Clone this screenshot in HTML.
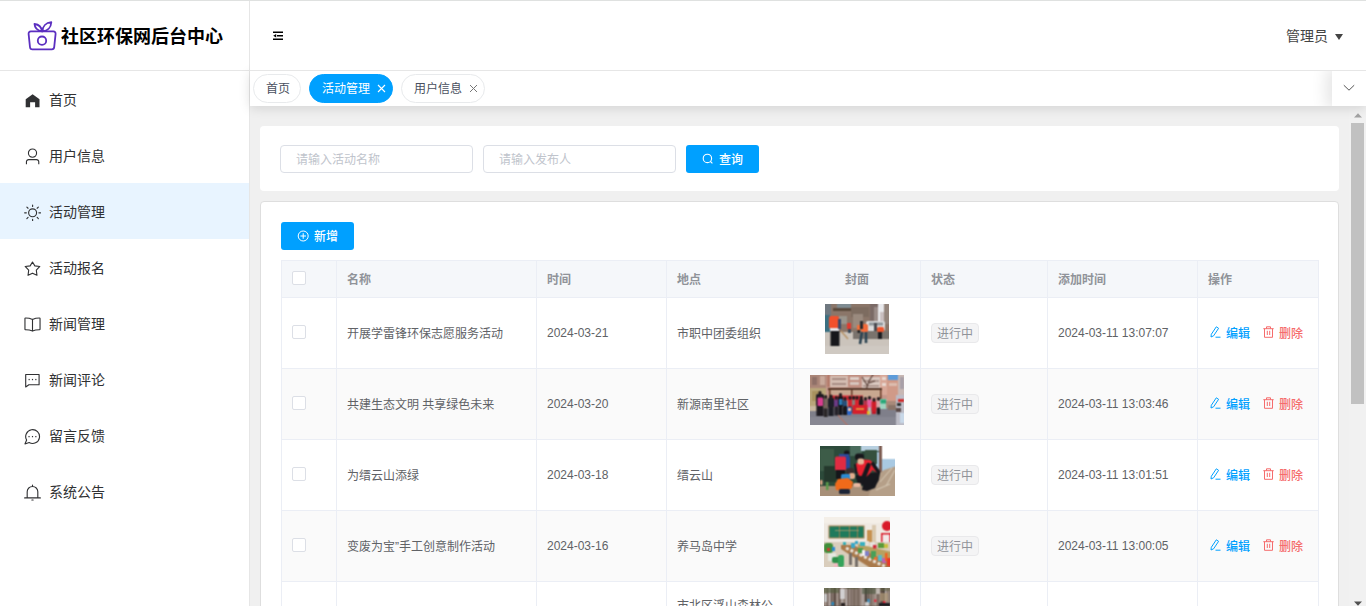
<!DOCTYPE html>
<html lang="zh-CN">
<head>
<meta charset="utf-8">
<title>社区环保网后台中心</title>
<style>
*{box-sizing:border-box;margin:0;padding:0}
html,body{width:1366px;height:606px;overflow:hidden;background:#fff}
body{font-family:"Liberation Sans","Noto Sans CJK SC",sans-serif;font-size:14px;color:#303133;position:relative}
#topline{position:absolute;left:0;top:0;width:1366px;height:1px;background:#dfe1e0;z-index:10}
.abs{position:absolute}
/* sidebar */
#side{position:absolute;left:0;top:0;width:250px;height:606px;border-right:1px solid #e6e6e6;background:#fff}
#logo{position:absolute;left:0;top:0;width:249px;height:71px;border-bottom:1px solid #e6e6e6}
#logo svg{position:absolute;left:26px;top:19px}
#logo .t{position:absolute;left:61px;top:22px;font-size:18px;font-weight:bold;color:#000;line-height:30px;white-space:nowrap;letter-spacing:0}
.mi{position:absolute;left:0;width:249px;height:56px;line-height:56px;font-size:14px;color:#303133}
.mi.on{background:#e8f4ff}
.mi span{position:absolute;left:49px;top:1px}
.mi svg{position:absolute;left:23.5px;top:20.5px;width:17px;height:17px}
/* header */
#head{position:absolute;left:250px;top:0;width:1116px;height:71px;border-bottom:1px solid #e6e6e6;background:#fff;z-index:4}
#fold{position:absolute;left:23px;top:31px}
#user{position:absolute;right:38px;top:26px;font-size:14px;color:#444;line-height:20px}
#caret{position:absolute;right:23px;top:33.500px;width:0;height:0;border-left:4px solid transparent;border-right:4px solid transparent;border-top:6px solid #444}
/* tabs */
#tabs{position:absolute;left:250px;top:71px;width:1116px;height:35px;background:#fff;box-shadow:0 2px 12px 0 rgba(0,0,0,.13);z-index:3}
.tab{position:absolute;top:3px;height:29px;border:1px solid #e8eaec;border-radius:15px;font-size:12px;line-height:29px;color:#495060;background:#fff;white-space:nowrap;padding-left:12px}
.tab.on{background:#00a0ff;border-color:#00a0ff;color:#fff}
.tab .x{position:absolute;top:9px}
#tabsin{position:absolute;left:0;top:0;width:1116px;height:35px;overflow:hidden}
#more{position:absolute;right:0;top:0;width:34px;height:35px;background:#fff;box-shadow:-3px 0 15px 3px rgba(0,0,0,.1)}
/* main */
#main{position:absolute;left:250px;top:106px;width:1099px;height:500px;background:#f0f0f0;overflow:hidden}
#sb{position:absolute;left:1349px;top:106px;width:17px;height:500px;background:#f1f1f1}
#sb .th{position:absolute;left:2px;top:17px;width:13px;height:281px;background:#c1c1c1}
.card{position:absolute;background:#fff;border-radius:4px}
.inp{position:absolute;top:19px;width:193px;height:28px;border:1px solid #dcdfe6;border-radius:4px;font-size:12px;line-height:28px;color:#c0c4cc;padding-left:15px}
.btn{position:absolute;height:28px;background:#00a0ff;border-radius:3px;color:#fff;font-size:12px;line-height:28px;white-space:nowrap}
table{position:absolute;left:20px;top:58px;border-collapse:collapse;table-layout:fixed;width:1037px;font-size:12px;color:#606266}
th,td{border:1px solid #ebeef5;padding:0 10px;text-align:left;vertical-align:middle;overflow:hidden;white-space:nowrap}
th{height:37px;background:#f5f7fa;color:#909399;font-weight:bold}
td{height:71px;line-height:23px}
tr.s td{background:#fafafa}
.cb{display:block;position:relative;top:-1px;width:14px;height:14px;border:1px solid #dcdfe6;border-radius:2px;background:#fff}
.z{position:relative;top:1px}
th .z{top:-1px}
.tag{display:inline-block;vertical-align:middle;position:relative;top:0px;height:20px;line-height:20px;padding:0 5px;border:1px solid #e9e9eb;background:#f4f4f5;color:#909399;border-radius:4px;font-size:12px}
td.img{padding:0;position:relative}
td.img svg{position:absolute;top:6px}
.op span{display:inline-block;white-space:nowrap}
.op svg{vertical-align:-1px;margin-right:5px}
.op b{font-weight:500;position:relative;top:1px}
.ed{color:#00a0ff;margin-left:2px}.de{color:#f56c6c;margin-left:13px}
</style>
</head>
<body>
<div id="topline"></div>
<svg width="0" height="0" style="position:absolute">
<defs>
<filter id="bl" x="-5%" y="-5%" width="110%" height="110%" color-interpolation-filters="sRGB"><feConvolveMatrix order="3" kernelMatrix="1 2 1 2 4 2 1 2 1" divisor="16" edgeMode="duplicate" preserveAlpha="true"/></filter>
<clipPath id="c1"><rect width="64" height="50"/></clipPath>
<clipPath id="c2"><rect width="94" height="50"/></clipPath>
<clipPath id="c3"><rect width="75" height="50"/></clipPath>
<clipPath id="c4"><rect width="66" height="50"/></clipPath>
<g id="im1" clip-path="url(#c1)"><g filter="url(#bl)">
<rect x="-2" y="-2" width="68" height="54" fill="#8b7669"/>
<rect x="-2" y="-2" width="8" height="14" fill="#6f7880"/>
<rect x="-2" y="11" width="7" height="18" fill="#3b7082"/>
<rect x="12" y="-2" width="14" height="6" fill="#7f8c92"/>
<rect x="8" y="4" width="26" height="3" fill="#5a4a3c"/>
<rect x="14" y="12" width="8" height="8" fill="#9a958c"/>
<rect x="45" y="-2" width="8" height="21" fill="#7a6a66"/>
<rect x="49" y="3" width="4" height="14" fill="#9a8c88"/>
<rect x="53" y="-2" width="6" height="20" fill="#e9e9ec"/>
<rect x="55" y="8" width="4" height="10" fill="#c9bfc0"/>
<rect x="59" y="-2" width="7" height="22" fill="#94857c"/>
<rect x="-2" y="28" width="68" height="24" fill="#cbc4bc"/>
<rect x="26" y="3" width="18" height="10" fill="#7d6c60"/>
<rect x="28" y="10" width="10" height="14" fill="#9a8a7e"/>
<rect x="28" y="27" width="38" height="8" fill="#7a736d"/>
<rect x="41" y="17" width="19" height="10" rx="2" fill="#dcdcdd"/>
<rect x="44" y="18.500" width="14" height="3" fill="#8d9498"/>
<rect x="4" y="12" width="10" height="13" rx="2" fill="#f1502c"/>
<rect x="5" y="24" width="9" height="3.500" fill="#e4e4e8"/>
<rect x="5.500" y="27" width="9" height="15" fill="#17171b"/>
<rect x="13" y="15" width="3" height="10" fill="#3b4a6a"/>
<path d="M16 27l7 8" stroke="#b89468" stroke-width="1.500"/>
<rect x="22" y="19" width="4" height="6" fill="#e03a30"/>
<rect x="23" y="25" width="3" height="4" fill="#3a4a5a"/>
<rect x="32" y="21" width="3" height="5" fill="#f0703a"/>
<rect x="32.500" y="26" width="2.500" height="3" fill="#222"/>
<rect x="36" y="20" width="7" height="8" rx="1.500" fill="#f26a3a"/>
<rect x="35" y="17" width="3" height="8" fill="#2a2a2e"/>
<path d="M37 28l-2 12M41 28l0 11" stroke="#2b4352" stroke-width="2.600"/>
<rect x="52" y="23" width="7" height="5" rx="1.500" fill="#f0552c"/>
<rect x="53" y="28" width="4" height="7" fill="#1c1c20"/>
<rect x="49" y="19" width="3" height="8" fill="#4a4a50"/>
<rect x="-2" y="42" width="68" height="10" fill="#cfc9c2"/>
</g></g>
<g id="im2" clip-path="url(#c2)"><g filter="url(#bl)">
<rect x="-2" y="-2" width="98" height="54" fill="#c4978a"/>
<rect x="-2" y="-2" width="18" height="16" fill="#ab8678"/>
<rect x="2" y="2" width="5" height="8" fill="#8f7068"/><rect x="10" y="1" width="5" height="9" fill="#c9aa9c"/>
<rect x="17" y="-2" width="3" height="14" fill="#b47c6c"/>
<rect x="20" y="1" width="18" height="11" fill="#d4bdb2"/>
<rect x="22" y="3" width="14" height="2" fill="#a88d84"/><rect x="22" y="8" width="14" height="2" fill="#a88d84"/>
<rect x="38" y="-2" width="12" height="14" fill="#c08e80"/>
<rect x="40" y="2" width="9" height="3" fill="#ddcfc8"/><rect x="40" y="7" width="9" height="3" fill="#d6c4bc"/>
<rect x="52" y="2" width="18" height="12" fill="#d9c8c0"/>
<rect x="53" y="5" width="16" height="2" fill="#b09890"/><rect x="53" y="10" width="16" height="2" fill="#b09890"/>
<rect x="70" y="-2" width="7" height="22" fill="#d8a898"/>
<rect x="72" y="2" width="4" height="3" fill="#e8d8d0"/><rect x="72" y="8" width="4" height="3" fill="#e8d8d0"/>
<rect x="78" y="-2" width="10" height="7" fill="#5c9bd9"/>
<rect x="77" y="5" width="12" height="22" fill="#d09a88"/>
<rect x="79" y="8" width="8" height="3" fill="#dcbcae"/>
<rect x="88" y="-2" width="8" height="22" fill="#c8b8b4"/>
<rect x="90" y="2" width="4" height="12" fill="#a8a0a8"/>
<path d="M55 18l4-12 5-8M57 10l-5-8M59 8l6-2" stroke="#5a4038" stroke-width="1.100" fill="none"/>
<rect x="-2" y="13" width="18" height="20" fill="#b9a67a"/>
<rect x="2" y="16" width="8" height="10" fill="#a8925e"/>
<rect x="18" y="13" width="54" height="2.200" fill="#56382a"/>
<rect x="19" y="15" width="52" height="7" fill="#c8a890"/>
<rect x="19" y="14" width="1.500" height="10" fill="#6a3c28"/><rect x="41" y="15" width="1.500" height="8" fill="#6a3c28"/><rect x="70" y="15" width="1.500" height="12" fill="#6a3c28"/>
<rect x="21" y="20.500" width="32" height="5" fill="#d42a34"/>
<rect x="-2" y="33" width="98" height="19" fill="#7f7f8a"/>
<rect x="-2" y="42" width="98" height="10" fill="#878792"/>
<rect x="-2" y="31" width="12" height="5" fill="#c9b9a0"/>
<rect x="6" y="19" width="8" height="12" rx="1.500" fill="#1f1b22"/><rect x="6.4" y="30.5" width="7.2" height="10.5" fill="#1d1a20"/><ellipse cx="10" cy="17.8" rx="1.600" ry="1.900" fill="#221c1e"/>
<rect x="13.5" y="23" width="4.5" height="11" rx="1.500" fill="#75645c"/><rect x="13.9" y="33.5" width="3.7" height="8.5" fill="#2a2628"/><ellipse cx="15.75" cy="21.8" rx="1.600" ry="1.900" fill="#221c1e"/>
<rect x="18" y="22.5" width="6" height="10.5" rx="1.500" fill="#1e1f28"/><rect x="18.4" y="32.5" width="5.2" height="8.5" fill="#1b1c24"/><ellipse cx="21" cy="21.3" rx="1.600" ry="1.900" fill="#221c1e"/>
<rect x="24" y="24" width="4.5" height="8" rx="1.500" fill="#6b3a84"/><rect x="24.4" y="31.5" width="3.7" height="9" fill="#25222a"/><ellipse cx="26.25" cy="22.8" rx="1.600" ry="1.900" fill="#221c1e"/>
<rect x="28" y="21" width="5" height="11" rx="1.500" fill="#14161c"/><rect x="28.4" y="31.5" width="4.2" height="8.5" fill="#16161c"/><ellipse cx="30.5" cy="19.8" rx="1.600" ry="1.900" fill="#221c1e"/>
<rect x="33" y="25" width="4" height="8" rx="1.500" fill="#27507a"/><rect x="33.4" y="32.5" width="3.2" height="7.5" fill="#17171c"/><ellipse cx="35" cy="23.8" rx="1.600" ry="1.900" fill="#221c1e"/>
<rect x="38" y="24" width="4" height="8" rx="1.500" fill="#d4222e"/><rect x="38.4" y="31.5" width="3.2" height="6.5" fill="#2a2228"/><ellipse cx="40" cy="22.8" rx="1.600" ry="1.900" fill="#221c1e"/>
<rect x="42" y="24" width="3.2" height="8" rx="1.500" fill="#8c7c78"/><rect x="42.4" y="31.5" width="2.4" height="6.5" fill="#333"/><ellipse cx="43.6" cy="22.8" rx="1.600" ry="1.900" fill="#221c1e"/>
<rect x="45" y="24" width="4" height="8" rx="1.500" fill="#d8222e"/><rect x="45.4" y="31.5" width="3.2" height="6.5" fill="#2a2228"/><ellipse cx="47" cy="22.8" rx="1.600" ry="1.900" fill="#221c1e"/>
<rect x="49" y="24" width="4.5" height="9" rx="1.500" fill="#1f1c20"/><rect x="49.4" y="32.5" width="3.7" height="5.5" fill="#1f1c20"/><ellipse cx="51.25" cy="22.8" rx="1.600" ry="1.900" fill="#221c1e"/>
<rect x="53.5" y="25" width="4" height="8" rx="1.500" fill="#b8304a"/><rect x="53.9" y="32.5" width="3.2" height="5.5" fill="#2a2228"/><ellipse cx="55.5" cy="23.8" rx="1.600" ry="1.900" fill="#221c1e"/>
<rect x="57.5" y="24" width="4" height="9" rx="1.500" fill="#e85aa0"/><rect x="57.9" y="32.5" width="3.2" height="7" fill="#b8b4b0"/><ellipse cx="59.5" cy="22.8" rx="1.600" ry="1.900" fill="#221c1e"/>
<rect x="61.5" y="26" width="5" height="11" rx="1.500" fill="#d01c28"/><rect x="61.9" y="36.5" width="4.2" height="2.5" fill="#c01828"/><ellipse cx="64" cy="24.8" rx="1.600" ry="1.900" fill="#221c1e"/>
<rect x="66.5" y="25" width="4" height="8" rx="1.500" fill="#d9a4a8"/><rect x="66.9" y="32.5" width="3.2" height="7" fill="#1a1a1e"/><ellipse cx="68.5" cy="23.8" rx="1.600" ry="1.900" fill="#221c1e"/>
<rect x="7.500" y="22.500" width="5.500" height="8.500" rx="1" fill="#d83c8e"/>
<rect x="29" y="24" width="3.500" height="6" fill="#2a7bb4"/>
<rect x="33" y="31" width="4.500" height="9" rx="1.500" fill="#17171c"/>
<rect x="37" y="32" width="4.500" height="8" rx="1.500" fill="#2c66c8"/>
<rect x="38" y="33" width="3" height="3" fill="#e8c0a8"/>
<rect x="42.500" y="30" width="15" height="9" fill="#d6202c"/>
<rect x="46" y="33" width="8" height="2" fill="#e8a040" opacity=".8"/>
<rect x="57" y="36" width="2.500" height="3.500" fill="#e0c020"/>
<rect x="70" y="24" width="6.500" height="10" fill="#9fd4c0"/>
<rect x="70.500" y="24.500" width="5.500" height="4" fill="#28a878"/>
<path d="M28 40l10 11" stroke="#d0684a" stroke-width="0.900"/>
<rect x="86" y="20" width="10" height="32" fill="#bcbcc6"/>
<rect x="88" y="24" width="6" height="3" fill="#d03030"/><rect x="86" y="33" width="5" height="4" fill="#5a4a48"/><rect x="90" y="38" width="5" height="10" fill="#c8d8e8"/><rect x="87" y="28" width="4" height="3" fill="#333"/>
<rect x="76" y="26" width="10" height="7" fill="#a88a7a"/>
<rect x="78" y="30" width="8" height="5" fill="#8a7468"/>
</g></g>
<g id="im3" clip-path="url(#c3)"><g filter="url(#bl)">
<rect x="-2" y="-2" width="79" height="54" fill="#2c4a3a"/>
<rect x="0" y="3" width="14" height="22" fill="#3d5c48"/>
<rect x="4" y="20" width="12" height="16" fill="#24382c"/>
<rect x="30" y="-2" width="12" height="12" fill="#4a6c5c"/>
<rect x="41" y="-2" width="20" height="7" fill="#b8d0e0"/>
<rect x="56" y="6" width="21" height="22" fill="#a9c9e2"/>
<rect x="61" y="-2" width="16" height="15" fill="#ffffff"/>
<rect x="45" y="4" width="12" height="14" fill="#35503e"/>
<rect x="59" y="-2" width="3" height="30" fill="#7c5c52"/>
<rect x="-2" y="40" width="79" height="12" fill="#a78f78"/>
<path d="M48 52l7-22 9-6 13-4v32z" fill="#b59f88"/>
<path d="M60 36l12-14M66 40l9-16M56 44l14-6" stroke="#d8ccb8" stroke-width="1"/>
<rect x="24" y="4.500" width="5.500" height="5" rx="2" fill="#15151a"/>
<rect x="19" y="8" width="10" height="6" fill="#2a4a9a"/>
<rect x="24" y="10" width="6" height="13" rx="2" fill="#27489a"/>
<rect x="15" y="10.500" width="11" height="14" rx="1.500" fill="#e02b42"/>
<rect x="16" y="24" width="9" height="9" fill="#15161a"/>
<path d="M36 29l22-3 1 6-4 10-8 3-5-1 1-6-5 0-2-6z" fill="#17181d"/>
<path d="M35 18.200L43.800 13.400L50 13.900L52.900 16.700L58.200 24.900L57.700 27L52.400 24L49.600 27.800L46.700 30.600L39 29.700L37 25z" fill="#e8212f"/>
<path d="M52 16.500L58.500 26L57 34L53 40" stroke="#17181d" stroke-width="3.500" fill="none" stroke-linejoin="round"/>
<path d="M48.500 19L45 28L41 37" stroke="#17181d" stroke-width="4.500" fill="none" stroke-linecap="round"/>
<path d="M35 18L36.500 28" stroke="#17181d" stroke-width="2" fill="none"/>
<rect x="35" y="7.500" width="9" height="7" rx="3" fill="#17171b"/>
<rect x="37.500" y="12.500" width="6.500" height="6" rx="2" fill="#e6b79a"/>
<rect x="33" y="37" width="8" height="4" rx="2" fill="#e8b8a0"/>
<rect x="26" y="22" width="8.500" height="7" rx="3" fill="#3a2e2e"/>
<rect x="29" y="27" width="6" height="6" rx="2" fill="#e2ac8c"/>
<rect x="21" y="28" width="9" height="6" rx="1.500" fill="#2a8bd2"/>
<path d="M18 33l10-1 5 4-1 6-6 3-10-1-1-6z" fill="#f06a1a"/>
<rect x="19" y="43" width="11" height="5" rx="1.500" fill="#1c2436"/>
<rect x="0" y="34" width="2.500" height="5" rx="1" fill="#e0a888"/>
<rect x="6" y="36" width="2.500" height="8" fill="#5a9a4a"/>
</g></g>
<g id="im4" clip-path="url(#c4)"><g filter="url(#bl)">
<rect x="-2" y="-2" width="70" height="54" fill="#efe9e2"/>
<rect x="-2" y="-2" width="70" height="8" fill="#f4efe8"/>
<rect x="4.500" y="8.500" width="36" height="13" fill="#a9804e"/>
<rect x="5.500" y="9.500" width="34" height="11" fill="#1f7a5c"/>
<rect x="15" y="9" width=".8" height="12" fill="#a9804e"/><rect x="25" y="9" width=".8" height="12" fill="#a9804e"/><rect x="33" y="9" width=".8" height="12" fill="#a9804e"/>
<rect x="11" y="13" width="24" height="1" fill="#b8a070" opacity=".7"/>
<rect x="43" y="13" width="6" height="13" fill="#c79150"/>
<rect x="48" y="8" width="4" height="18" fill="#d9c9b0"/>
<ellipse cx="63" cy="9" rx="5" ry="5" fill="#d91a2a"/>
<rect x="57" y="16" width="10" height="11" fill="#d91a2a"/>
<rect x="58.500" y="17.500" width="7" height="8.500" fill="#f2e8e8"/>
<rect x="-2" y="25" width="70" height="27" fill="#d9cdbc"/>
<path d="M17 28l12 0 39 18v6l-20 0-31-20z" fill="#a9794a"/>
<path d="M22 31l40 19" stroke="#e8e4dc" stroke-width="3" stroke-dasharray="3 2"/>
<path d="M34 27l34 8v10l-34-14z" fill="#b8a060"/>
<rect x="0" y="26" width="9" height="10" rx="3" fill="#3f8f3a"/>
<rect x="3" y="31" width="3" height="3" fill="#d03a30"/>
<rect x="8" y="30" width="3" height="4" fill="#2a8ad0"/>
<rect x="4" y="36" width="8" height="8" fill="#e4e8e0"/>
<rect x="8" y="40" width="8" height="6" rx="2" fill="#2f8f4a"/>
<rect x="14" y="38" width="6" height="12" rx="2" fill="#35a35a"/>
<rect x="10" y="46" width="4" height="5" fill="#f0b8c0"/>
<rect x="19" y="25" width="3" height="3" fill="#38b0b8"/>
<rect x="27" y="26" width="4" height="5" fill="#3aa8c8"/>
<rect x="31" y="24" width="3" height="3" fill="#3aa8c8"/>
<rect x="36" y="25" width="5" height="4" fill="#38b0c0"/>
<rect x="41" y="24" width="4" height="5" fill="#e8e0d8"/>
<rect x="46" y="25" width="5" height="5" fill="#e6e2dc"/>
<rect x="49" y="28" width="3.500" height="3.500" fill="#d02838"/>
<rect x="54" y="26" width="6" height="5" fill="#5a9a3a"/>
<rect x="60" y="27" width="4" height="4" fill="#c8c040"/>
<rect x="34" y="31" width="5" height="5" fill="#4a9a48"/>
<rect x="38" y="33" width="3" height="6" fill="#f0f0f0"/>
<rect x="41" y="34" width="4" height="5" fill="#8080c8"/>
<rect x="47" y="34" width="5" height="8" fill="#48a058"/>
<rect x="50" y="40" width="3" height="3" fill="#f07030"/>
<rect x="54" y="38" width="4" height="6" fill="#58b8c8"/>
<rect x="58" y="41" width="4" height="5" fill="#c060b0"/>
<rect x="61" y="36" width="2.500" height="8" fill="#f06020"/>
<rect x="63" y="41" width="4" height="8" fill="#e83828"/>
<rect x="25" y="36" width="3" height="12" fill="#77706a"/><rect x="31" y="40" width="3" height="10" fill="#77706a"/>
</g></g>
<g id="im5" clip-path="url(#c4)"><g filter="url(#bl)">
<rect x="-2" y="-2" width="70" height="54" fill="#8f7f76"/>
<rect x="0" y="-2" width="2" height="40" fill="#a3948c"/><rect x="3.5" y="-2" width="1" height="40" fill="#5e4e46"/><rect x="4.5" y="-2" width="2" height="40" fill="#b9aeaa"/><rect x="7" y="-2" width="1" height="40" fill="#5e4e46"/><rect x="9.5" y="-2" width="2.5" height="40" fill="#5e4e46"/><rect x="12.5" y="-2" width="1" height="40" fill="#ad9f98"/><rect x="15" y="-2" width="1" height="40" fill="#5e4e46"/><rect x="16.5" y="-2" width="1" height="40" fill="#94857c"/><rect x="17.5" y="-2" width="1.5" height="40" fill="#b9aeaa"/><rect x="19.5" y="-2" width="2" height="40" fill="#94857c"/><rect x="22" y="-2" width="1" height="40" fill="#c9c2c2"/><rect x="23.5" y="-2" width="1" height="40" fill="#6f5f56"/><rect x="25.5" y="-2" width="1" height="40" fill="#ad9f98"/><rect x="26.5" y="-2" width="1" height="40" fill="#6f5f56"/><rect x="29" y="-2" width="2.5" height="40" fill="#7b6b60"/><rect x="33" y="-2" width="2.5" height="40" fill="#7b6b60"/><rect x="36.5" y="-2" width="1.5" height="40" fill="#a3948c"/><rect x="38.5" y="-2" width="1" height="40" fill="#c9c2c2"/><rect x="41" y="-2" width="2" height="40" fill="#4f4640"/><rect x="44" y="-2" width="1" height="40" fill="#5e4e46"/><rect x="46.5" y="-2" width="1.5" height="40" fill="#7b6b60"/><rect x="48.5" y="-2" width="2.5" height="40" fill="#94857c"/><rect x="51" y="-2" width="1" height="40" fill="#ad9f98"/><rect x="53" y="-2" width="2" height="40" fill="#7b6b60"/><rect x="56.5" y="-2" width="2.5" height="40" fill="#5e4e46"/><rect x="59" y="-2" width="2" height="40" fill="#4f4640"/><rect x="61" y="-2" width="1" height="40" fill="#c9c2c2"/><rect x="63.5" y="-2" width="2" height="40" fill="#94857c"/>
<rect x="-2" y="-2" width="17" height="7" fill="#4e5c3a" opacity=".55"/>
<rect x="22" y="-2" width="12" height="3" fill="#5a5c40" opacity=".7"/>
<rect x="38" y="-2" width="14" height="8" fill="#46543a" opacity=".55"/>
<rect x="56" y="-2" width="10" height="5" fill="#5c6040" opacity=".5"/>
<rect x="16" y="1" width="5" height="10" fill="#dcdce0" opacity=".8"/>
<rect x="0" y="6" width="3" height="8" fill="#cfd4d8" opacity=".8"/>
<rect x="52" y="0" width="4" height="6" fill="#d8d4d0" opacity=".7"/>
<rect x="56" y="5" width="8" height="8" fill="#b09a78" opacity=".7"/>
<rect x="7.500" y="14" width="2.500" height="3.500" fill="#2a8ac0"/>
<rect x="43" y="11" width="3" height="4" fill="#4a8ab0"/>
<rect x="50" y="11.500" width="2.500" height="2.500" fill="#d83040"/>
<rect x="59" y="13" width="2.500" height="3" fill="#d82030"/>
<rect x="41" y="14" width="4" height="4" fill="#e0e0e0" opacity=".8"/>
<rect x="55" y="15" width="11" height="5" fill="#1c1c22"/>
<rect x="17" y="15" width="4" height="4" fill="#2a2424"/>
<rect x="-2" y="18" width="70" height="34" fill="#5a4e46"/>
</g></g>
</defs>
</svg>
<div id="side">
  <div id="logo">
    <svg width="32" height="34" viewBox="0 0 32 34" fill="none" stroke="#5b2fc0" stroke-width="1.800" stroke-linecap="round" stroke-linejoin="round">
      <path d="M4.800 12.400H27.400a2.200 2.200 0 0 1 2.200 2.500L28.200 28.200a2.400 2.400 0 0 1-2.400 2.200H6.400a2.400 2.400 0 0 1-2.400-2.200L2.600 14.900a2.200 2.200 0 0 1 2.200-2.500z"/>
      <circle cx="16" cy="21.700" r="4.200"/>
      <path d="M16 12.400C11 11.500 8.700 8.500 8.500 5C12.500 5.500 15.500 8 16 12.400z"/>
      <path d="M16.500 12.400C16.500 7.500 20 3.800 25.300 3.200C25 8.500 21.500 12 16.500 12.400z"/>
    </svg>
    <div class="t">社区环保网后台中心</div>
  </div>
  <div class="mi" style="top:71px"><svg width="16" height="16" viewBox="0 0 16 16"><path d="M8.100 2.200L1.600 6.900V14.400H5.750V9.700H10.450V14.400H14.600V6.900z" fill="#303133"/></svg><span>首页</span></div>
  <div class="mi" style="top:127px"><svg width="16" height="16" viewBox="0 0 16 16" fill="none" stroke="#303133" stroke-width="1.050" stroke-linecap="round" stroke-linejoin="round"><circle cx="8" cy="4.800" r="3.850"/><path d="M2.300 15.300V13a2.100 2.100 0 0 1 2.100-2.100H11.800a2.100 2.100 0 0 1 2.100 2.100V15.300" stroke-linecap="butt"/></svg><span>用户信息</span></div>
  <div class="mi on" style="top:183px"><svg width="16" height="16" viewBox="0 0 16 16" fill="none" stroke="#303133" stroke-width="1.050" stroke-linecap="round" stroke-linejoin="round"><circle cx="8.100" cy="8.300" r="3.750"/><path d="M8.100 .9v1.400M8.100 14.300v1.400M.6 8.300h1.600M14 8.300h1.600M2.700 2.900l1.100 1.100M12.400 12.600l1.100 1.100M2.700 13.700l1.100-1.100M12.400 4l1.100-1.100"/></svg><span>活动管理</span></div>
  <div class="mi" style="top:239px"><svg width="16" height="16" viewBox="0 0 16 16" fill="none" stroke="#303133" stroke-width="1.050" stroke-linecap="round" stroke-linejoin="round"><path d="M8 1.900L10.200 5.500L14.900 6.100L11.600 9.600L12.200 14.400L8 12.400L3.800 14.400L4.400 9.600L1.100 6.100L5.800 5.500z"/></svg><span>活动报名</span></div>
  <div class="mi" style="top:295px"><svg width="16" height="16" viewBox="0 0 16 16" fill="none" stroke="#303133" stroke-width="1.050" stroke-linecap="round" stroke-linejoin="round"><path d="M.9 2.400Q.9 1.900 1.500 1.900C4 1.900 6 2.300 8 3.200C10 2.300 12 1.900 14.500 1.900Q15.100 1.900 15.100 2.400V12.500Q15.100 13 14.500 13C12 13 10 13.300 8 14.200C6 13.300 4 13 1.500 13Q.9 13 .9 12.500zM8 3.200V14.200"/></svg><span>新闻管理</span></div>
  <div class="mi" style="top:351px"><svg width="16" height="16" viewBox="0 0 16 16" fill="none" stroke="#303133" stroke-width="1.050" stroke-linecap="round" stroke-linejoin="round"><path d="M1.600 2.300H14.200V12H4.600L1.600 14.100z"/><g fill="#303133" stroke="none"><rect x="4.300" y="6.500" width="1.100" height="1.200"/><rect x="7.450" y="6.500" width="1.100" height="1.200"/><rect x="10.600" y="6.500" width="1.100" height="1.200"/></g></svg><span>新闻评论</span></div>
  <div class="mi" style="top:407px"><svg width="16" height="16" viewBox="0 0 16 16" fill="none" stroke="#303133" stroke-width="1.050" stroke-linecap="round" stroke-linejoin="round"><path d="M2.470 11.350A6.500 6.500 0 1 1 4.850 13.730L.9 15z"/><g fill="#303133" stroke="none"><rect x="4.200" y="7.500" width="1.100" height="1.200"/><rect x="7.450" y="7.500" width="1.100" height="1.200"/><rect x="10.600" y="7.500" width="1.100" height="1.200"/></g></svg><span>留言反馈</span></div>
  <div class="mi" style="top:463px"><svg width="16" height="16" viewBox="0 0 16 16" fill="none" stroke="#303133" stroke-width="1.050" stroke-linecap="round" stroke-linejoin="round"><path d="M3 13.100V7.300a5 5 0 0 1 10 0V13.100M.6 13.100H15.400M8 1v1.200M7.400 15h1.200"/></svg><span>系统公告</span></div>
</div>
<div id="head">
  <svg id="fold" width="10" height="10" viewBox="0 0 10 10" fill="none" stroke="#000" stroke-width="1.600"><path d="M0 1.300H10M4 4.700H10M0 8.200H10"/><path d="M.2 4.700L3.200 3V6.400z" fill="#000" stroke="none"/></svg>
  <div id="user">管理员</div><div id="caret"></div>
</div>
<div id="tabs"><div id="tabsin">
  <div class="tab" style="left:3px;width:48px">首页</div>
  <div class="tab on" style="left:59px;width:84px">活动管理<svg class="x" style="left:66.500px" width="9" height="9" viewBox="0 0 9 9" stroke="#fff" stroke-width="1.100"><path d="M1 1l7 7M8 1l-7 7"/></svg></div>
  <div class="tab" style="left:151px;width:84px">用户信息<svg class="x" style="left:66.500px" width="9" height="9" viewBox="0 0 9 9" stroke="#777" stroke-width="1"><path d="M1 1l7 7M8 1l-7 7"/></svg></div>
  <div id="more"><svg style="position:absolute;left:11px;top:13px" width="12" height="8" viewBox="0 0 12 8" fill="none" stroke="#555" stroke-width="1"><path d="M.8 1.200l5.200 5 5.200-5"/></svg></div>
</div></div>
<div id="main">
<div class="card" style="left:10px;top:20px;width:1079px;height:65px">
  <div class="inp" style="left:20px">请输入活动名称</div>
  <div class="inp" style="left:223px">请输入发布人</div>
  <div class="btn" style="left:426px;top:19px;width:73px"><svg style="position:absolute;left:16px;top:8px" width="12" height="12" viewBox="0 0 12 12" fill="none" stroke="#fff" stroke-width="1.100"><circle cx="5.400" cy="5.400" r="4.200"/><path d="M8.500 8.500l1.900 1.900"/></svg><span style="position:absolute;left:33px;top:1px;font-weight:500">查询</span></div>
</div>
<div class="card" style="left:10px;top:95px;width:1079px;height:520px;border:1px solid #dedede">
  <div class="btn" style="left:20px;top:20px;width:73px"><svg style="position:absolute;left:16px;top:8px" width="12" height="12" viewBox="0 0 12 12" fill="none" stroke="#fff" stroke-width="1"><circle cx="6.200" cy="6" r="5"/><path d="M6.200 3.200v5.600M3.400 6h5.600"/></svg><span style="position:absolute;left:33px;top:1px;font-weight:500">新增</span></div>
  <table>
  <colgroup><col style="width:55px"><col style="width:200px"><col style="width:130px"><col style="width:127px"><col style="width:127px"><col style="width:127px"><col style="width:150px"><col style="width:121px"></colgroup>
  <tr><th class="c"><i class="cb"></i></th><th><span class="z">名称</span></th><th><span class="z">时间</span></th><th><span class="z">地点</span></th><th style="text-align:center"><span class="z">封面</span></th><th><span class="z">状态</span></th><th><span class="z">添加时间</span></th><th><span class="z">操作</span></th></tr>
<tr><td class="c"><i class="cb"></i></td><td><span class="z">开展学雷锋环保志愿服务活动</span></td><td>2024-03-21</td><td class="pl"><span class="z">市职中团委组织</span></td><td class="img"><svg style="left:31px" width="64" height="50"><use href="#im1"/></svg></td><td><span class="tag">进行中</span></td><td>2024-03-11 13:07:07</td><td class="op"><span class="ed"><svg width="11" height="12" viewBox="0 0 11 12" fill="none" stroke="#00a0ff" stroke-width="1" stroke-linejoin="round"><path d="M6.300 .8L8.600 2.300L3.600 9.800L1 11L1.300 8.300z"/><path d="M5.500 11.200H10.500"/></svg><b>编辑</b></span><span class="de"><svg width="11" height="12" viewBox="0 0 11 12" fill="none" stroke="#f56c6c" stroke-width="1"><path d="M.3 2.700H10.700M3.500 2.700V.8H7.500V2.700M1.500 2.700V11.300H9.500V2.700M4.300 4.800V9M6.700 4.800V9"/></svg><b>删除</b></span></td></tr>
<tr class="s"><td class="c"><i class="cb"></i></td><td><span class="z">共建生态文明 共享绿色未来</span></td><td>2024-03-20</td><td class="pl"><span class="z">新源南里社区</span></td><td class="img"><svg style="left:16px" width="94" height="50"><use href="#im2"/></svg></td><td><span class="tag">进行中</span></td><td>2024-03-11 13:03:46</td><td class="op"><span class="ed"><svg width="11" height="12" viewBox="0 0 11 12" fill="none" stroke="#00a0ff" stroke-width="1" stroke-linejoin="round"><path d="M6.300 .8L8.600 2.300L3.600 9.800L1 11L1.300 8.300z"/><path d="M5.500 11.200H10.500"/></svg><b>编辑</b></span><span class="de"><svg width="11" height="12" viewBox="0 0 11 12" fill="none" stroke="#f56c6c" stroke-width="1"><path d="M.3 2.700H10.700M3.500 2.700V.8H7.500V2.700M1.500 2.700V11.300H9.500V2.700M4.300 4.800V9M6.700 4.800V9"/></svg><b>删除</b></span></td></tr>
<tr><td class="c"><i class="cb"></i></td><td><span class="z">为缙云山添绿</span></td><td>2024-03-18</td><td class="pl"><span class="z">缙云山</span></td><td class="img"><svg style="left:26px" width="75" height="50"><use href="#im3"/></svg></td><td><span class="tag">进行中</span></td><td>2024-03-11 13:01:51</td><td class="op"><span class="ed"><svg width="11" height="12" viewBox="0 0 11 12" fill="none" stroke="#00a0ff" stroke-width="1" stroke-linejoin="round"><path d="M6.300 .8L8.600 2.300L3.600 9.800L1 11L1.300 8.300z"/><path d="M5.500 11.200H10.500"/></svg><b>编辑</b></span><span class="de"><svg width="11" height="12" viewBox="0 0 11 12" fill="none" stroke="#f56c6c" stroke-width="1"><path d="M.3 2.700H10.700M3.500 2.700V.8H7.500V2.700M1.500 2.700V11.300H9.500V2.700M4.300 4.800V9M6.700 4.800V9"/></svg><b>删除</b></span></td></tr>
<tr class="s"><td class="c"><i class="cb"></i></td><td><span class="z">变废为宝”手工创意制作活动</span></td><td>2024-03-16</td><td class="pl"><span class="z">养马岛中学</span></td><td class="img"><svg style="left:30px" width="66" height="50"><use href="#im4"/></svg></td><td><span class="tag">进行中</span></td><td>2024-03-11 13:00:05</td><td class="op"><span class="ed"><svg width="11" height="12" viewBox="0 0 11 12" fill="none" stroke="#00a0ff" stroke-width="1" stroke-linejoin="round"><path d="M6.300 .8L8.600 2.300L3.600 9.800L1 11L1.300 8.300z"/><path d="M5.500 11.200H10.500"/></svg><b>编辑</b></span><span class="de"><svg width="11" height="12" viewBox="0 0 11 12" fill="none" stroke="#f56c6c" stroke-width="1"><path d="M.3 2.700H10.700M3.500 2.700V.8H7.500V2.700M1.500 2.700V11.300H9.500V2.700M4.300 4.800V9M6.700 4.800V9"/></svg><b>删除</b></span></td></tr>
<tr><td class="c"><i class="cb"></i></td><td><span class="z">浮山森林公园环保志愿行</span></td><td>2024-03-15</td><td class="pl"><span class="z">市北区浮山森林公<br>园</span></td><td class="img"><svg style="left:30px" width="66" height="50"><use href="#im5"/></svg></td><td><span class="tag">进行中</span></td><td>2024-03-11 12:58:20</td><td class="op"><span class="ed"><svg width="11" height="12" viewBox="0 0 11 12" fill="none" stroke="#00a0ff" stroke-width="1" stroke-linejoin="round"><path d="M6.300 .8L8.600 2.300L3.600 9.800L1 11L1.300 8.300z"/><path d="M5.500 11.200H10.500"/></svg><b>编辑</b></span><span class="de"><svg width="11" height="12" viewBox="0 0 11 12" fill="none" stroke="#f56c6c" stroke-width="1"><path d="M.3 2.700H10.700M3.500 2.700V.8H7.500V2.700M1.500 2.700V11.300H9.500V2.700M4.300 4.800V9M6.700 4.800V9"/></svg><b>删除</b></span></td></tr>
  </table>
</div>
</div>
<div id="sb"><svg style="position:absolute;left:5px;top:6.500px" width="8" height="5" viewBox="0 0 8 5"><path d="M0 4.500L4 .3L8 4.500z" fill="#a3a3a3"/></svg><div class="th"></div><svg style="position:absolute;left:5px;top:495px" width="8" height="5" viewBox="0 0 8 5"><path d="M0 .5L4 4.700L8 .5z" fill="#505050"/></svg></div>
</body>
</html>
